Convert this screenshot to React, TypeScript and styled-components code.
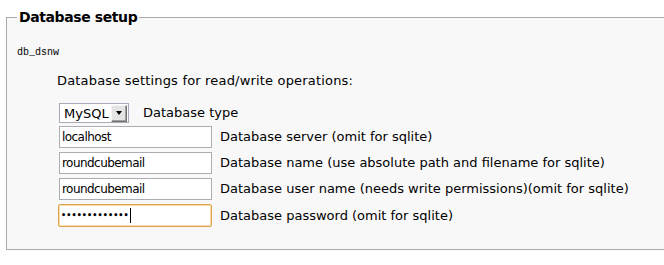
import React from 'react';
import styled, { createGlobalStyle } from 'styled-components';

const GlobalStyle = createGlobalStyle`
  html, body {
    margin: 0;
    padding: 0;
    background: #fff;
    overflow: hidden;
  }
  body {
    font-family: "DejaVu Sans", Verdana, sans-serif;
    color: #000;
  }
`;

const Page = styled.div`
  padding: 9px 0 0 6px;
`;

// the right edge of the box lies past the window in the screenshot
const Fieldset = styled.fieldset`
  margin: 0;
  padding: 12px 10px 22px 10px;
  border: 1px solid #aaa;
  border-right: none;
  background: #f8f8f8;
  min-width: 0;
`;

const Legend = styled.legend`
  padding: 0 2px;
  font-family: "DejaVu Sans", Verdana, sans-serif;
  font-size: 14px;
  font-weight: bold;
  letter-spacing: -0.4px;
  color: #000;
`;

const Code = styled.div`
  font-family: "Liberation Mono", "DejaVu Sans Mono", monospace;
  font-size: 10px;
  line-height: 12px;
  margin-top: 10px;
`;

const Section = styled.div`
  padding-left: 40px;
  margin-top: 14px;
`;

const Intro = styled.p`
  margin: 0 0 14px 0;
  font-size: 13px;
  line-height: 16px;
  letter-spacing: 0.18px;
`;

const Row = styled.div<{ $gap?: number }>`
  display: flex;
  align-items: center;
  gap: 8px;
  padding-left: 2px;
  margin-bottom: ${p => p.$gap ?? 4}px;
`;

const Label = styled.span<{ $indent?: number }>`
  font-size: 13px;
  line-height: 16px;
  padding-left: ${p => p.$indent ?? 0}px;
  white-space: nowrap;
`;

const SelectBox = styled.div`
  display: flex;
  align-items: center;
  justify-content: space-between;
  box-sizing: border-box;
  width: 70px;
  height: 20px;
  padding: 0 1px 0 4px;
  border: 1px solid #a5acb5;
  background: #fff;
  font-size: 13px;
`;

const DropButton = styled.div`
  box-sizing: border-box;
  width: 16px;
  height: 17px;
  display: flex;
  align-items: center;
  justify-content: center;
  background: #e4e4e4;
  border: 1px solid;
  border-color: #f4f4f4 #707070 #707070 #f4f4f4;
  box-shadow: inset -1px -1px 0 #a0a0a0;

  &::after {
    content: '';
    border-left: 3.5px solid transparent;
    border-right: 3.5px solid transparent;
    border-top: 4px solid #000;
  }
`;

const TextInput = styled.input`
  box-sizing: border-box;
  width: 153px;
  height: 22px;
  margin: 0;
  padding: 0 2px;
  border: 1px solid #abadb3;
  background: #fff;
  font-family: "DejaVu Sans", Tahoma, sans-serif;
  font-size: 12px;
  letter-spacing: -0.55px;
  color: #000;
  outline: none;
`;

const PasswordBox = styled.div`
  box-sizing: border-box;
  width: 154px;
  height: 23px;
  margin-left: -1px;
  padding: 0 2px 0 2px;
  display: flex;
  align-items: center;
  border: 1px solid #dba550;
  border-radius: 2px;
  box-shadow: inset 0 0 0 1px #f5dcaa;
  background: #fff;
`;

const Dots = styled.span`
  font-family: "DejaVu Sans", sans-serif;
  font-size: 8px;
  font-weight: bold;
  letter-spacing: 0.1px;
  line-height: 1;
`;

const Caret = styled.span`
  display: inline-block;
  width: 1px;
  height: 15px;
  margin-left: 1px;
  background: #000;
`;

const fields = [
  { value: 'localhost', label: 'Database server (omit for sqlite)' },
  { value: 'roundcubemail', label: 'Database name (use absolute path and filename for sqlite)' },
  { value: 'roundcubemail', label: 'Database user name (needs write permissions)(omit for sqlite)' },
];

export default function App() {
  return (
    <Page>
      <GlobalStyle />
      <Fieldset>
        <Legend>Database setup</Legend>
        <Code>db_dsnw</Code>
        <Section>
          <Intro>Database settings for read/write operations:</Intro>
          <Row $gap={3}>
            <SelectBox>
              MySQL
              <DropButton />
            </SelectBox>
            <Label $indent={6}>Database type</Label>
          </Row>
          {fields.map((f, i) => (
            <Row key={i}>
              <TextInput type="text" value={f.value} readOnly />
              <Label>{f.label}</Label>
            </Row>
          ))}
          <Row $gap={0}>
            <PasswordBox>
              <Dots>{'\u2022'.repeat(13)}</Dots>
              <Caret />
            </PasswordBox>
            <Label>Database password (omit for sqlite)</Label>
          </Row>
        </Section>
      </Fieldset>
    </Page>
  );
}
